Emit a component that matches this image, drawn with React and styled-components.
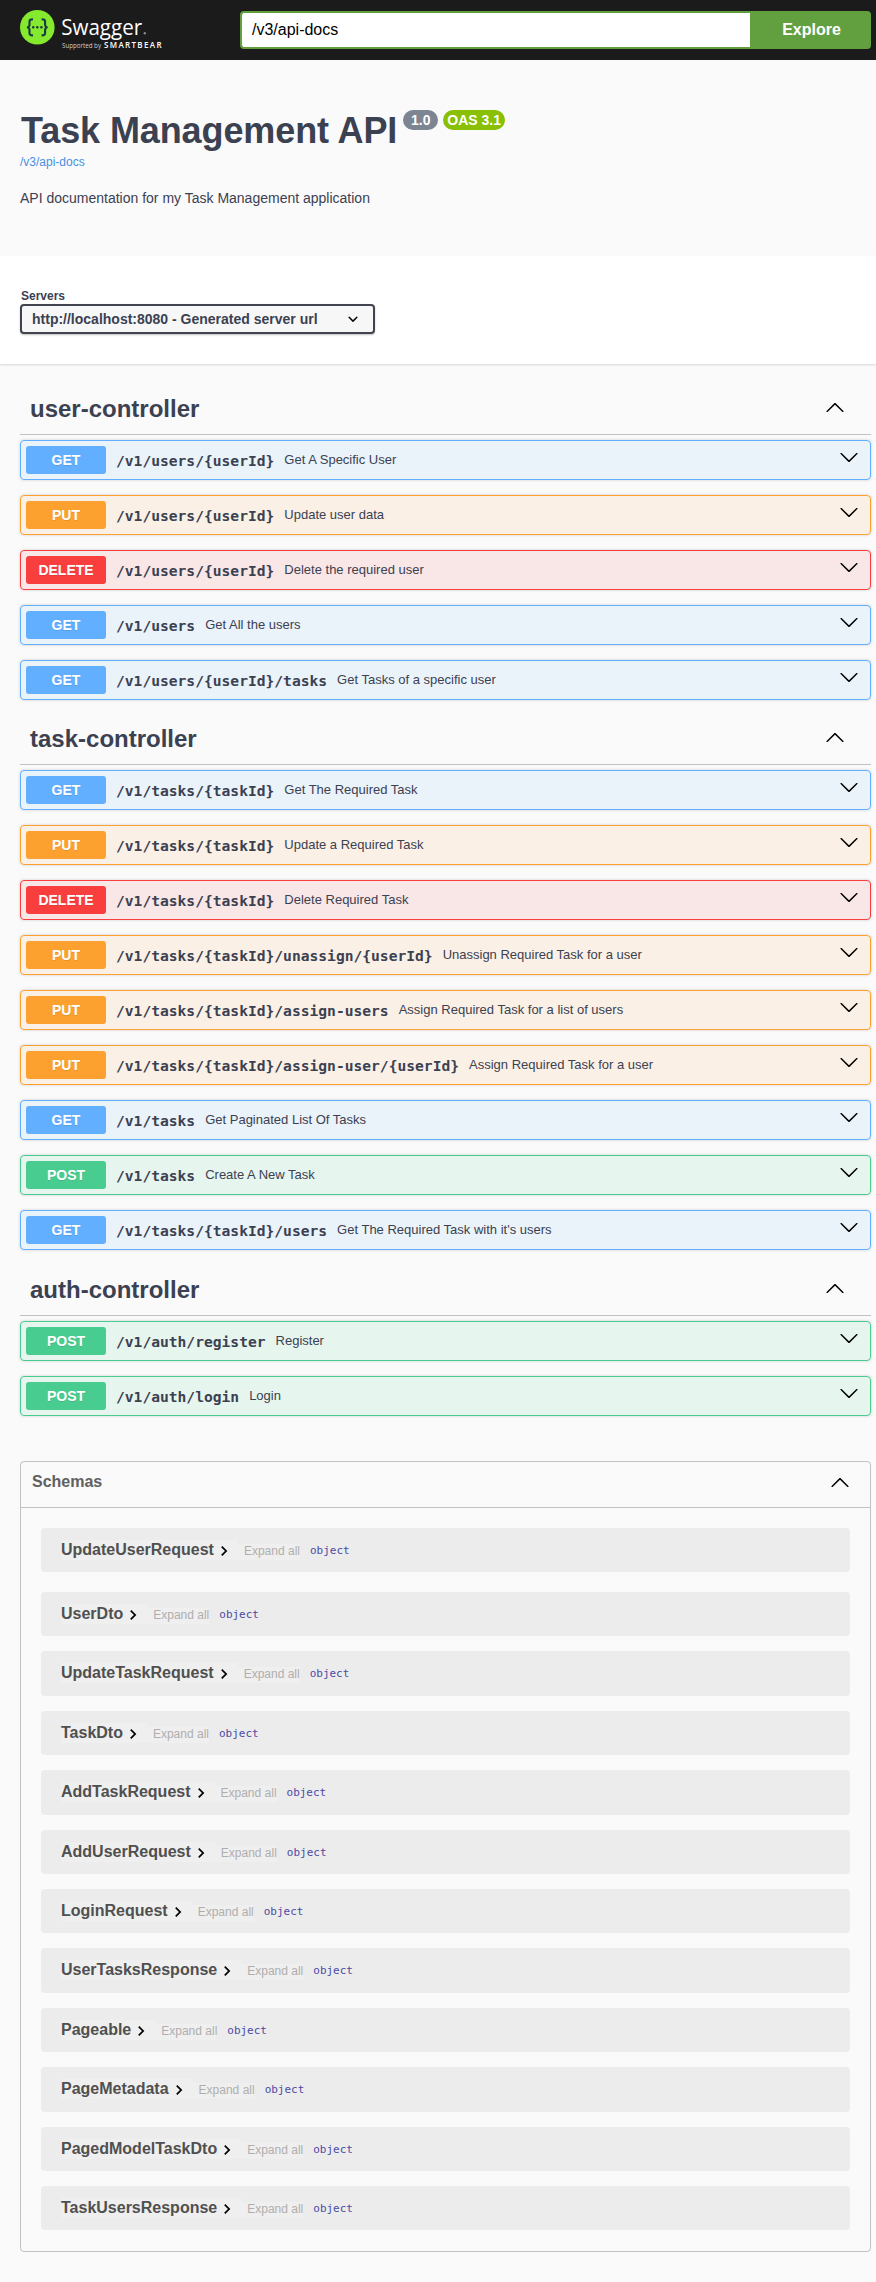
import React from "react";
import styled, { createGlobalStyle } from "styled-components";

const GlobalStyle = createGlobalStyle`
  *, *::before, *::after { box-sizing: border-box; }
  body {
    margin: 0;
    background: #fafafa;
    color: #3b4151;
    font-family: "Liberation Sans", Arial, sans-serif;
  }
  h1, h2, p { margin: 0; }
`;

const MONO = `"DejaVu Sans Mono", monospace`;

const METHOD_COLORS = {
  GET: { solid: "#61affe", tint: "rgba(97, 175, 254, 0.1)" },
  PUT: { solid: "#fca130", tint: "rgba(252, 161, 48, 0.1)" },
  DELETE: { solid: "#f93e3e", tint: "rgba(249, 62, 62, 0.1)" },
  POST: { solid: "#49cc90", tint: "rgba(73, 204, 144, 0.1)" },
};

const Page = styled.div`
  min-height: 2282px;
  background: #fafafa;
`;

const Topbar = styled.header`
  display: flex;
  align-items: center;
  height: 60px;
  padding: 0 5px 0 14px;
  background: #1b1b1b;
`;

const LogoSvg = styled.svg`
  display: block;
  flex: none;
  width: 156px;
  height: 52px;
  margin-right: 70px;
`;

const UrlForm = styled.form`
  display: flex;
  flex: 1;
  height: 38px;
`;

const UrlInput = styled.input`
  flex: 1;
  min-width: 0;
  border: 2px solid #62a03f;
  border-right: 0;
  border-radius: 4px 0 0 4px;
  padding: 0 10px;
  background: #fff;
  color: #000;
  font: 16px "Liberation Sans", Arial, sans-serif;
  outline: none;
`;

const ExploreButton = styled.button`
  width: 121px;
  border: 0;
  border-radius: 0 4px 4px 0;
  padding: 0 0 1px 2px;
  background: #62a03f;
  color: #fff;
  font: bold 16px "Liberation Sans", Arial, sans-serif;
`;

const Info = styled.section`
  height: 196px;
  padding: 50px 20px 0;
`;

const TitleRow = styled.div`
  display: flex;
  align-items: flex-start;
`;

const Title = styled.h1`
  font-size: 36px;
  line-height: 41px;
  letter-spacing: -0.1px;
  padding-left: 1px;
  margin-right: 6px;
`;

const Badge = styled.span`
  width: ${(p) => p.$width}px;
  height: 20px;
  margin-right: 5px;
  border-radius: 57px;
  background: ${(p) => p.$color};
  color: #fff;
  font-size: 14px;
  font-weight: bold;
  line-height: 20px;
  text-align: center;
`;

const DocsLink = styled.a`
  display: block;
  margin-top: 4px;
  color: #4990e2;
  font-size: 12px;
  line-height: 14px;
`;

const Description = styled.p`
  margin-top: 21px;
  font-size: 14px;
  line-height: 16px;
`;

const SchemeBar = styled.section`
  height: 108px;
  padding: 33px 20px 0;
  background: #fff;
  box-shadow: 0 1px 2px 0 rgba(0, 0, 0, 0.15);
`;

const ServersLabel = styled.div`
  padding-left: 1px;
  font-size: 12px;
  font-weight: bold;
  line-height: 15px;
`;

const ServerSelect = styled.div`
  display: flex;
  align-items: center;
  justify-content: space-between;
  width: 355px;
  height: 30px;
  border: 2px solid #41444e;
  border-radius: 4px;
  padding: 0 10px;
  background: #f7f7f7;
  box-shadow: 0 1px 2px 0 rgba(0, 0, 0, 0.25);
  font-size: 14px;
  font-weight: bold;
`;

const Main = styled.main`
  padding: 20.6px 5px 0 20px;
`;

const TagHeader = styled.div`
  display: flex;
  align-items: flex-start;
  justify-content: space-between;
  height: 50.4px;
  margin-bottom: 5px;
  padding: 10.4px 26px 0 10px;
  border-bottom: 1px solid rgba(59, 65, 81, 0.3);
`;

const TagTitle = styled.h2`
  font-size: 24px;
  line-height: 27px;
`;

const Icon = styled.svg`
  display: block;
  flex: none;
  width: 20px;
  height: 20px;
  fill: #000;
  margin-top: ${(p) => p.$top || 0}px;
`;

const Operation = styled.div`
  display: flex;
  height: 40px;
  margin-bottom: 15px;
  padding: 5px 11px 5px 5px;
  border: 1px solid ${(p) => METHOD_COLORS[p.$method].solid};
  border-radius: 4px;
  background: ${(p) => METHOD_COLORS[p.$method].tint};
  box-shadow: 0 0 3px rgba(0, 0, 0, 0.19);
`;

const Method = styled.span`
  width: 80px;
  height: 28px;
  border-radius: 3px;
  background: ${(p) => METHOD_COLORS[p.$method].solid};
  color: #fff;
  font-size: 14px;
  font-weight: bold;
  line-height: 28px;
  text-align: center;
  text-shadow: 0 1px 0 rgba(0, 0, 0, 0.1);
`;

const Path = styled.span`
  margin: 0 10px;
  font-family: ${MONO};
  font-size: 14.62px;
  font-weight: bold;
  line-height: 29px;
  white-space: nowrap;
`;

const Summary = styled.span`
  flex: 1;
  font-size: 13px;
  line-height: 27px;
`;

const Schemas = styled.section`
  margin-top: 45.2px;
  height: 791px;
  border: 1px solid rgba(59, 65, 81, 0.3);
  border-radius: 4px;
`;

const SchemasHeader = styled.div`
  display: flex;
  justify-content: space-between;
  height: 46px;
  padding: 10px 20px 0 11px;
  border-bottom: 1px solid rgba(59, 65, 81, 0.3);
  color: #606060;
  font-size: 16px;
  font-weight: bold;
  line-height: 19px;
`;

const SchemaList = styled.div`
  padding: 19.7px 20px 0;
`;

const Schema = styled.article`
  display: flex;
  align-items: flex-start;
  height: 44.4px;
  margin-bottom: 15px;
  padding: 12px 20px 0;
  border-radius: 4px;
  background: #ececec;

  &:first-child { margin-bottom: 20px; }
`;

const SchemaToggle = styled.span`
  display: flex;
  height: 20px;
  padding-right: 4px;
  background: #efefef;
  color: #505050;
  font-size: 16px;
  font-weight: bold;
  line-height: 19px;
`;

const ExpandAll = styled.span`
  height: 16px;
  margin-top: 4px;
  padding-left: 6px;
  background: #efefef;
  color: #afaeae;
  font-size: 12px;
  line-height: 14px;
`;

const TypeName = styled.span`
  margin: 4px 0 0 10px;
  color: #4a4aa4;
  font-family: ${MONO};
  font-size: 10.97px;
  line-height: 14px;
`;

const SELECT_ARROW =
  "M13.418 7.859a.695.695 0 01.978 0 .68.68 0 010 .969l-3.908 3.83a.697.697 0 01-.979 0l-3.908-3.83a.68.68 0 010-.969.695.695 0 01.978 0L10 11l3.418-3.141z";
const ARROW_DOWN =
  "M17.418 6.109c.272-.268.709-.268.979 0s.271.701 0 .969l-7.908 7.83c-.27.268-.707.268-.979 0l-7.908-7.83c-.27-.268-.27-.701 0-.969.271-.268.709-.268.979 0L10 13.25z";
const ARROW_UP =
  "M17.418 14.908c.272.268.709.268.979 0s.271-.701 0-.969l-7.908-7.83c-.27-.268-.707-.268-.979 0l-7.908 7.83c-.27.268-.27.701 0 .969.271.268.709.268.979 0L10 7.767z";
const CHEVRON_RIGHT = "M10 6L8.59 7.41 13.17 12l-4.58 4.59L10 18l6-6z";

const TAGS = [
  {
    name: "user-controller",
    operations: [
      ["GET", "/v1/users/{userId}", "Get A Specific User"],
      ["PUT", "/v1/users/{userId}", "Update user data"],
      ["DELETE", "/v1/users/{userId}", "Delete the required user"],
      ["GET", "/v1/users", "Get All the users"],
      ["GET", "/v1/users/{userId}/tasks", "Get Tasks of a specific user"],
    ],
  },
  {
    name: "task-controller",
    operations: [
      ["GET", "/v1/tasks/{taskId}", "Get The Required Task"],
      ["PUT", "/v1/tasks/{taskId}", "Update a Required Task"],
      ["DELETE", "/v1/tasks/{taskId}", "Delete Required Task"],
      ["PUT", "/v1/tasks/{taskId}/unassign/{userId}", "Unassign Required Task for a user"],
      ["PUT", "/v1/tasks/{taskId}/assign-users", "Assign Required Task for a list of users"],
      ["PUT", "/v1/tasks/{taskId}/assign-user/{userId}", "Assign Required Task for a user"],
      ["GET", "/v1/tasks", "Get Paginated List Of Tasks"],
      ["POST", "/v1/tasks", "Create A New Task"],
      ["GET", "/v1/tasks/{taskId}/users", "Get The Required Task with it's users"],
    ],
  },
  {
    name: "auth-controller",
    operations: [
      ["POST", "/v1/auth/register", "Register"],
      ["POST", "/v1/auth/login", "Login"],
    ],
  },
];

const SCHEMAS = [
  "UpdateUserRequest",
  "UserDto",
  "UpdateTaskRequest",
  "TaskDto",
  "AddTaskRequest",
  "AddUserRequest",
  "LoginRequest",
  "UserTasksResponse",
  "Pageable",
  "PageMetadata",
  "PagedModelTaskDto",
  "TaskUsersResponse",
];

function Logo() {
  return (
    <LogoSvg viewBox="14 4 156 52" role="img" aria-label="Swagger, supported by SmartBear">
      <circle cx="37.3" cy="27.3" r="17.3" fill="#85ea2d" />
      <g fill="none" stroke="#173647" strokeWidth="2.1">
        <path d="M33 19.2c-3.2 0-3.7 1-3.5 3.6.2 2.8-.2 4.5-2.6 4.5 2.4 0 2.8 1.7 2.6 4.5-.2 2.6.3 3.6 3.5 3.6" />
        <path d="M41.6 19.2c3.2 0 3.7 1 3.5 3.6-.2 2.8.2 4.5 2.6 4.5-2.4 0-2.8 1.7-2.6 4.5.2 2.6-.3 3.6-3.5 3.6" />
      </g>
      <g fill="#173647">
        <circle cx="33.2" cy="27.3" r="1.2" />
        <circle cx="37.3" cy="27.3" r="1.2" />
        <circle cx="41.4" cy="27.3" r="1.2" />
      </g>
      <text x="61.2" y="34.5" fill="#fff" fontFamily="'Open Sans', sans-serif" fontSize="22" textLength="81" lengthAdjust="spacingAndGlyphs">Swagger</text>
      <circle cx="144.8" cy="33.3" r="1.2" fill="#8a8a8a" />
      <text x="62" y="48" fill="#d0d0d0" fontFamily="'Open Sans', sans-serif" fontSize="6.5" textLength="39" lengthAdjust="spacingAndGlyphs">Supported by</text>
      <text x="104" y="48.3" fill="#fff" fontFamily="'Open Sans', sans-serif" fontWeight="600" fontSize="8" textLength="57.5" lengthAdjust="spacing">SMARTBEAR</text>
    </LogoSvg>
  );
}

function Arrow({ d, top, box = 20 }) {
  return (
    <Icon viewBox={`0 0 ${box} ${box}`} $top={top} aria-hidden="true">
      <path d={d} />
    </Icon>
  );
}

export default function App() {
  return (
    <Page>
      <GlobalStyle />
      <Topbar>
        <Logo />
        <UrlForm onSubmit={(e) => e.preventDefault()}>
          <UrlInput defaultValue="/v3/api-docs" aria-label="API definition URL" />
          <ExploreButton>Explore</ExploreButton>
        </UrlForm>
      </Topbar>

      <Info>
        <TitleRow>
          <Title>Task Management API</Title>
          <Badge $width={35} $color="#7d8492">1.0</Badge>
          <Badge $width={62} $color="#89bf04">OAS 3.1</Badge>
        </TitleRow>
        <DocsLink>/v3/api-docs</DocsLink>
        <Description>API documentation for my Task Management application</Description>
      </Info>

      <SchemeBar>
        <ServersLabel>Servers</ServersLabel>
        <ServerSelect>
          <span>http://localhost:8080 - Generated server url</span>
          <Arrow d={SELECT_ARROW} />
        </ServerSelect>
      </SchemeBar>

      <Main>
        {TAGS.map((tag) => (
          <section key={tag.name}>
            <TagHeader>
              <TagTitle>{tag.name}</TagTitle>
              <Arrow d={ARROW_UP} top={2} />
            </TagHeader>
            {tag.operations.map(([method, path, summary]) => (
              <Operation key={method + path} $method={method}>
                <Method $method={method}>{method}</Method>
                <Path>{path}</Path>
                <Summary>{summary}</Summary>
                <Arrow d={ARROW_DOWN} top={1} />
              </Operation>
            ))}
          </section>
        ))}

        <Schemas>
          <SchemasHeader>
            <span>Schemas</span>
            <Arrow d={ARROW_UP} />
          </SchemasHeader>
          <SchemaList>
            {SCHEMAS.map((name) => (
              <Schema key={name}>
                <SchemaToggle>
                  {name}
                  <Arrow d={CHEVRON_RIGHT} box={24} top={1} />
                </SchemaToggle>
                <ExpandAll>Expand all</ExpandAll>
                <TypeName>object</TypeName>
              </Schema>
            ))}
          </SchemaList>
        </Schemas>
      </Main>
    </Page>
  );
}
